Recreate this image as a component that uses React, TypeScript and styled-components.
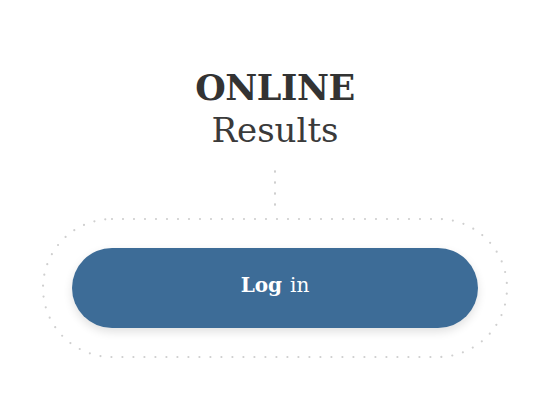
import React from "react"
import styled, { createGlobalStyle } from "styled-components"

const GlobalStyle = createGlobalStyle`
  html, body {
    margin: 0;
    padding: 0;
    background: #ffffff;
  }
  body {
    font-family: "DejaVu Serif", "Liberation Serif", serif;
    color: #333333;
  }
`

const Page = styled.div`
  width: 550px;
  height: 403px;
  display: flex;
  flex-direction: column;
  align-items: center;
  padding-top: 68px;
  box-sizing: border-box;
`

const Title = styled.h1`
  margin: 0;
  display: flex;
  flex-direction: column;
  align-items: center;
  font-weight: normal;
  color: #333333;
`

const TitleStrong = styled.span`
  font-family: "DejaVu Serif", serif;
  font-weight: 700;
  font-size: 35px;
  line-height: 40px;
  letter-spacing: -0.4px;
`

const TitleLight = styled.span`
  font-family: "DejaVu Serif", serif;
  font-weight: 400;
  font-size: 34px;
  line-height: 44px;
  color: #3a3a3a;
`

const Connector = styled.div`
  width: 2px;
  height: 44px;
  margin-top: 14px;
  background-image: radial-gradient(circle, #cfcfcf 1px, transparent 1.3px);
  background-size: 2px 11px;
`

const Frame = styled.div`
  position: relative;
  width: 466px;
  height: 140px;
  margin-top: 8px;
  display: flex;
  align-items: center;
  justify-content: center;
`

const FrameOutline = styled.svg`
  position: absolute;
  inset: 0;
  overflow: visible;
  pointer-events: none;
`

const LoginButton = styled.button`
  width: 406px;
  height: 80px;
  border: none;
  border-radius: 40px;
  background: #3d6c97;
  color: #ffffff;
  font-family: "DejaVu Serif", serif;
  font-size: 20px;
  cursor: pointer;
  box-shadow: 0 4px 10px rgba(0, 0, 0, 0.12);
  display: flex;
  align-items: center;
  justify-content: center;
  gap: 8px;
  padding: 0 0 7px;
  box-sizing: border-box;
`

const Strong = styled.b`
  font-weight: 700;
`

const Light = styled.span`
  font-weight: 400;
`

export default function App() {
  return (
    <>
      <GlobalStyle />
      <Page>
        <Title>
          <TitleStrong>ONLINE</TitleStrong>
          <TitleLight>Results</TitleLight>
        </Title>
        <Connector />
        <Frame>
          <FrameOutline width="466" height="140" viewBox="0 0 466 140">
            <rect
              x="1"
              y="1"
              width="464"
              height="138"
              rx="69"
              fill="none"
              stroke="#cfcfcf"
              strokeWidth="2.2"
              strokeLinecap="round"
              strokeDasharray="0 11"
            />
          </FrameOutline>
          <LoginButton>
            <Strong>Log</Strong>
            <Light>in</Light>
          </LoginButton>
        </Frame>
      </Page>
    </>
  )
}
